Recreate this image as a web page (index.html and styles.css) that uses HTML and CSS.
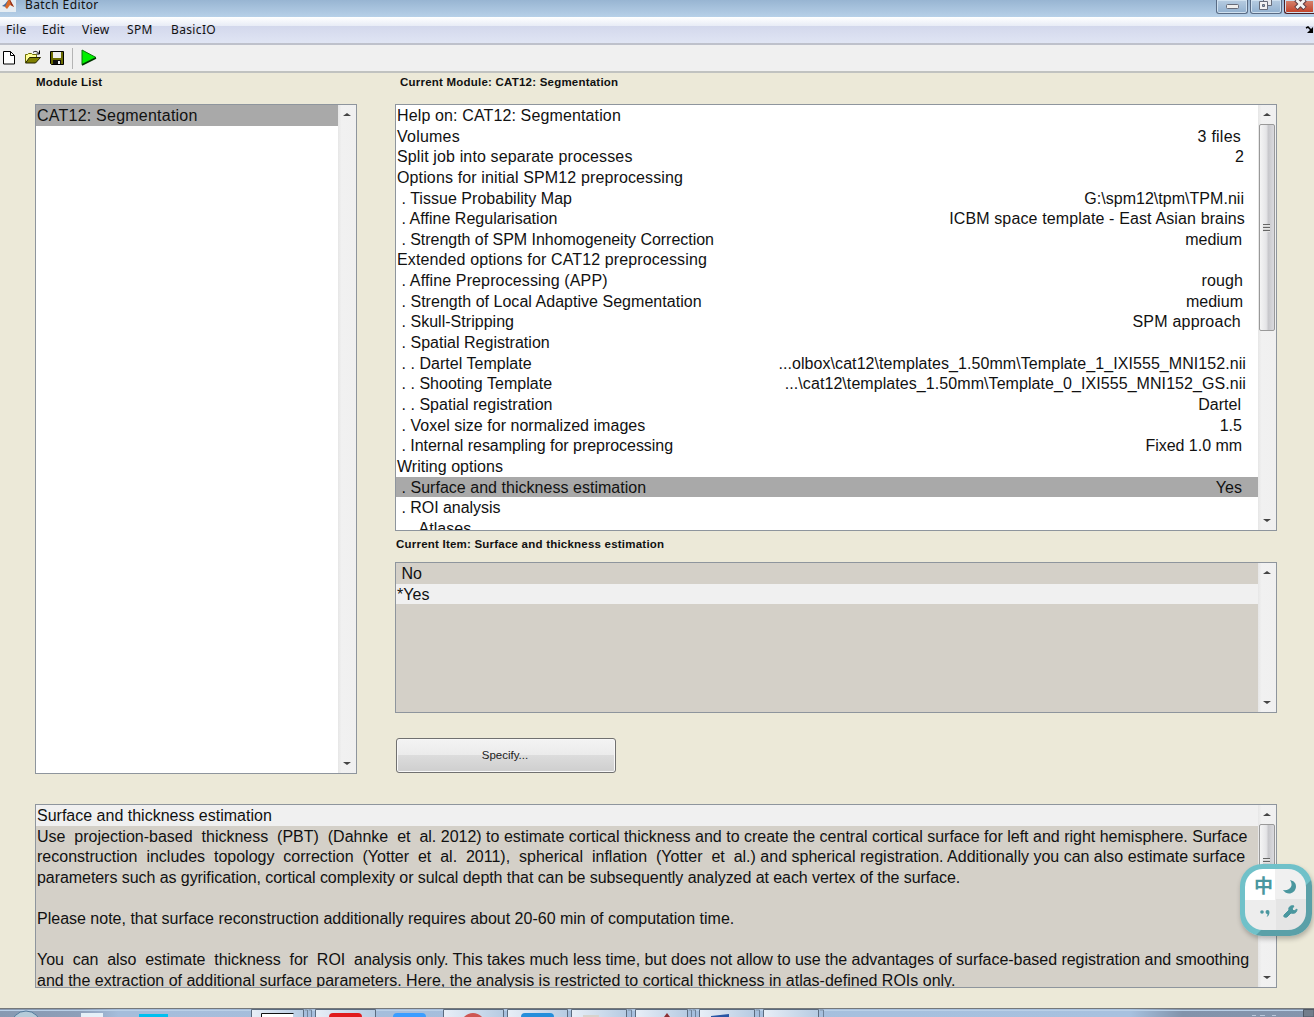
FILE: index.html
```
<!DOCTYPE html>
<html lang="en">
<head>
    <meta charset="UTF-8">
    <meta name="viewport" content="width=device-width, initial-scale=1.0">
    <title>Batch Editor</title>
    <link rel="stylesheet" href="styles.css">
</head>
<body>
    <header class="titlebar">
        <svg class="logo" width="16" height="12" viewBox="0 0 16 12">
            <rect width="16" height="12" fill="#e6edf3"/>
            <path d="M2 6l3-2 4-5 2 4-5 4z" fill="#426b9e"/>
            <path d="M5 7L9-2l5 9-4-2-3 4z" fill="#d96b2b"/>
            <path d="M9-2l5 9-3-2z" fill="#8e2c1b"/>
        </svg>
        <h1>Batch Editor</h1>
        <div class="window-buttons">
            <button class="win-btn"><svg width="30" height="13" viewBox="0 0 30 13"><rect x="9.500" y="4.500" width="12" height="4" rx="1" fill="#eee" stroke="#666b78"/></svg></button>
            <button class="win-btn"><svg width="30" height="13" viewBox="0 0 30 13"><path d="M12.500-2.500h8v8h-8z" fill="#e8eaee" stroke="#666b78"/><path d="M8.500 1.500h8v8h-8z" fill="#f2f2f2" stroke="#666b78"/><path d="M11.500 4.500h2v2h-2z" fill="#8ba9c8" stroke="#666b78"/></svg></button>
            <button class="win-btn close"><svg width="34" height="13" viewBox="0 0 34 13"><path d="M11-.5l9 9M20-.5l-9 9" stroke="#5b3b42" stroke-width="5"/><path d="M11.500 0l8 8M19.500 0l-8 8" stroke="#f4f4f4" stroke-width="3"/></svg></button>
        </div>
    </header>

    <nav class="menubar">
        <span class="m-file">File</span>
        <span class="m-edit">Edit</span>
        <span class="m-view">View</span>
        <span class="m-spm">SPM</span>
        <span>BasicIO</span>
        <svg class="dock" width="9" height="8" viewBox="0 0 9 8"><path d="M1 2l2-1 3 3" fill="none" stroke="#000" stroke-width="1.500"/><path d="M8 1v6H2z"/></svg>
    </nav>

    <div class="toolbar">
        <svg width="100" height="26" viewBox="0 0 100 26">
            <path d="M3.500 6.500h7l4 4v8.500h-11z" fill="#fff" stroke="#000"/>
            <path d="M10.500 6.500v4h4" fill="none" stroke="#000"/>
            <path d="M25.500 17.500v-8h2l1-1h3l1 1h4v3" fill="#ffff99" stroke="#6b6b00"/>
            <path d="M25.500 18l4-5.500h11l-5 5.500z" fill="#808000" stroke="#222200"/>
            <path d="M33 7.500c2-2 4-1 6 1M39.500 5.500v3.500h-3" fill="none" stroke="#000"/>
            <path d="M50.500 6.500h13v13h-12l-1-1z" fill="#6b6b00" stroke="#000"/>
            <path d="M53 7h8v6h-8z" fill="#eee"/>
            <path d="M53 15h8v4h-8z" fill="#111"/>
            <path d="M58 16h2v3h-2z" fill="#eee"/>
            <path d="M72.500 3v21" stroke="#b4b4b4"/>
            <path d="M82 5l14 7.500L82 19.500z" fill="#00f000" stroke="#087508"/>
            <path d="M82 20l14-7" stroke="#003800" stroke-width="1.500"/>
        </svg>
    </div>

    <main>
        <div class="columns">
            <section class="modules">
                <h2>Module List</h2>
                <div class="listbox">
                    <div class="items">
                        <div class="row selected wider">CAT12: Segmentation</div>
                    </div>
                    <div class="scroll"><i class="up"></i><i class="down"></i></div>
                </div>
            </section>

            <section class="current">
                <h2 class="module-title">Current Module: CAT12: Segmentation</h2>
                <div class="listbox module">
                    <div class="items">
                        <div class="row wide">Help on: CAT12: Segmentation</div>
                        <div class="row wider">Volumes<span class="in5">3 files</span></div>
                        <div class="row wide">Split job into separate processes<span class="in2">2</span></div>
                        <div class="row wide">Options for initial SPM12 preprocessing</div>
                        <div class="row"> . Tissue Probability Map<span class="in2">G:\spm12\tpm\TPM.nii</span></div>
                        <div class="row"> . Affine Regularisation<span class="in1 wide">ICBM space template - East Asian brains</span></div>
                        <div class="row tight"> . Strength of SPM Inhomogeneity Correction<span class="in4">medium</span></div>
                        <div class="row wide">Extended options for CAT12 preprocessing</div>
                        <div class="row wide"> . Affine Preprocessing (APP)<span class="in3">rough</span></div>
                        <div class="row"> . Strength of Local Adaptive Segmentation<span class="in3">medium</span></div>
                        <div class="row"> . Skull-Stripping<span class="in5 wider">SPM approach</span></div>
                        <div class="row"> . Spatial Registration</div>
                        <div class="row"> . . Dartel Template<span class="path">...olbox\cat12\templates_1.50mm\Template_1_IXI555_MNI152.nii</span></div>
                        <div class="row"> . . Shooting Template<span class="path">...\cat12\templates_1.50mm\Template_0_IXI555_MNI152_GS.nii</span></div>
                        <div class="row"> . . Spatial registration<span class="in5">Dartel</span></div>
                        <div class="row"> . Voxel size for normalized images<span class="in4">1.5</span></div>
                        <div class="row tight"> . Internal resampling for preprocessing<span class="in4">Fixed 1.0 mm</span></div>
                        <div class="row">Writing options</div>
                        <div class="row selected"> . Surface and thickness estimation<span class="in4">Yes</span></div>
                        <div class="row tight"> . ROI analysis</div>
                        <div class="row"> . . Atlases</div>
                    </div>
                    <div class="scroll"><i class="up"></i><div class="thumb"><b></b></div><i class="down"></i></div>
                </div>
                <h2 class="item-title">Current Item: Surface and thickness estimation</h2>
                <div class="listbox grey item">
                    <div class="items">
                        <div class="row"> No</div>
                        <div class="row light">*Yes</div>
                    </div>
                    <div class="scroll"><i class="up"></i><i class="down"></i></div>
                </div>
                <button class="specify">Specify...</button>
            </section>
        </div>

        <div class="listbox grey help">
            <div class="items">
                <div class="row light">Surface and thickness estimation</div>
                <div class="row">Use  projection-based  thickness  (PBT)  (Dahnke  et  al. 2012) to estimate cortical thickness and to create the central cortical surface for left and right hemisphere. Surface</div>
                <div class="row">reconstruction  includes  topology  correction  (Yotter  et  al.  2011),  spherical  inflation  (Yotter  et  al.) and spherical registration. Additionally you can also estimate surface</div>
                <div class="row narrow">parameters such as gyrification, cortical complexity or sulcal depth that can be subsequently analyzed at each vertex of the surface.</div>
                <div class="row"></div>
                <div class="row">Please note, that surface reconstruction additionally requires about 20-60 min of computation time.</div>
                <div class="row"></div>
                <div class="row tight">You  can  also  estimate  thickness  for  ROI  analysis only. This takes much less time, but does not allow to use the advantages of surface-based registration and smoothing</div>
                <div class="row">and the extraction of additional surface parameters. Here, the analysis is restricted to cortical thickness in atlas-defined ROIs only.</div>
            </div>
            <div class="scroll"><i class="up"></i><div class="thumb short"><b></b></div><i class="down"></i></div>
        </div>
    </main>

    <footer class="taskbar">
        <svg width="1314" height="8" viewBox="0 0 1314 8">
            <defs>
                <linearGradient id="bar">
                    <stop offset="0" stop-color="#8799b1"/>
                    <stop offset=".06" stop-color="#8d9fb9"/>
                    <stop offset=".09" stop-color="#a5bddb"/>
                    <stop offset=".86" stop-color="#a7c1df"/>
                    <stop offset=".9" stop-color="#8293ab"/>
                    <stop offset="1" stop-color="#8495ad"/>
                </linearGradient>
                <linearGradient id="task">
                    <stop offset="0" stop-color="#e8eff7"/>
                    <stop offset="1" stop-color="#b6cbe2"/>
                </linearGradient>
            </defs>
            <rect width="1314" height="8" fill="url(#bar)"/>
            <path d="M0 1.500h1314" stroke="#bad0e7"/>
            <circle cx="26" cy="17" r="15" fill="#b6cbd9" stroke="#52799b"/>
            <path d="M81 4h22v4H81z" fill="#e5f0f8"/>
            <path d="M139 5h29v3h-29z" fill="#00bfef"/>
            <g fill="url(#task)" stroke="#5b6b7e">
                <path d="M251.500 9V.5h52V9z"/>
                <path d="M315.500 9V.5h60V9z"/>
                <path d="M443.500 9V.5h60V9z"/>
                <path d="M507.500 9V.5h60V9z"/>
                <path d="M571.500 9V.5h55V9z"/>
                <path d="M635.500 9V.5h52V9z"/>
                <path d="M699.500 9V.5h55V9z"/>
                <path d="M763.500 9V.5h55V9z"/>
            </g>
            <path d="M307.500 8V1h-3M311.500 8V1h-3M631.500 8V1h-4M691.500 8V1h-3M695.500 8V1h-3M759.500 8V1h-4M823.500 8V1h-4" fill="none" stroke="#6f8299"/>
            <path d="M261 4h32v4h-32z" fill="#fff"/>
            <path d="M261.500 8V4.500h32" fill="none" stroke="#111"/>
            <rect x="329" y="4" width="33" height="12" rx="4" fill="#e01b1d"/>
            <rect x="393" y="4" width="33" height="12" rx="4" fill="#3b9dff"/>
            <circle cx="473" cy="16" r="12" fill="#ce5652"/>
            <rect x="521" y="4" width="33" height="12" rx="4" fill="#248edb"/>
            <path d="M583 6h16v2h-16z" fill="#d6d3cd"/>
            <path d="M664 8l3-4 3 4z" fill="#8c2f33"/>
            <path d="M711 7l18-2v3h-18z" fill="#2856a4"/>
            <path d="M1252 6.500h4M1260 6.500h5M1272 6.500h4" stroke="#bac8db"/>
            <path d="M1303.500 8V.5H1314V8z" fill="#737d8b" stroke="#4f5966"/>
        </svg>
    </footer>

    <!-- input method panel, floats over the window -->
    <div class="ime">
        <div class="ime-pad">
            <span class="lang">中</span>
            <svg width="61" height="61" viewBox="0 0 61 61">
                <path d="M45 11c4 6 0 11-7 10 4 6 12 4 13-3 0-4-2-6-6-7z" fill="#4a979f"/>
                <circle cx="17" cy="43" r="1.800" fill="#4a979f"/>
                <path d="M20.500 43a2 2 0 1 1 4 0q0 4-3 5 1-1 1-3-2 0-2-2z" fill="#4a979f"/>
                <path d="M39 46l5-5c-1-3 2-5 5-4l-2 3 2 2 3-2c0 4-3 5-6 4l-4 4q-4 1-3-2z" fill="#4a979f" stroke="#4a979f"/>
            </svg>
        </div>
    </div>
</body>
</html>
```
FILE: styles.css
```
* {
    box-sizing: border-box;
}
body {
    margin: 0;
    height: 1017px;
    overflow: hidden;
    background-color: #ece9d8;
    font-family: "Liberation Sans", Arial, sans-serif;
    color: #111;
    display: flex;
    flex-direction: column;
}
svg {
    display: block;
}
.titlebar {
    height: 17px;
    flex: none;
    display: flex;
    align-items: flex-start;
    background: linear-gradient(#98b5d2, #b7d0e8);
}
.logo {
    flex: none;
}
.titlebar h1 {
    margin: -3px 0 0 9px;
    font: 12px/16px "Noto Sans", sans-serif;
    letter-spacing: 0.4px;
}
.window-buttons {
    margin-left: auto;
    display: flex;
    gap: 2px;
}
.win-btn {
    width: 32px;
    height: 14px;
    padding: 0;
    border: 1px solid #596b84;
    border-top: none;
    border-radius: 0 0 3px 3px;
    box-shadow: inset 0 0 0 1px #cfe0ef;
    background: linear-gradient(#b7cce1, #91b0cf);
    overflow: hidden;
}
.win-btn.close {
    width: 30px;
    border-color: #4d1e24;
    border-right: none;
    border-radius: 0 0 0 3px;
    background: linear-gradient(#d68672, #c23f25);
}
.menubar {
    height: 28px;
    flex: none;
    display: flex;
    align-items: center;
    padding: 0 0 1px 6px;
    border-bottom: 2px solid #bec1cb;
    background: linear-gradient(#fff, #e8ecf6 34%, #d3d8ec 36%, #e0e5f4);
    font: 12px "Noto Sans", sans-serif;
    letter-spacing: 0.35px;
}
.m-file {
    width: 36px;
}
.m-edit {
    width: 40px;
}
.m-view {
    width: 45px;
}
.m-spm {
    width: 44px;
}
.dock {
    margin-left: auto;
}
.toolbar {
    height: 28px;
    flex: none;
    background-color: #f0f0f0;
    border-bottom: 2px solid #c0c2c0;
}
main {
    flex: 1;
    padding: 0 37px 0 35px;
}
.columns {
    display: flex;
    gap: 38px;
}
.modules {
    width: 322px;
}
.current {
    flex: 1;
}
h2 {
    margin: 0;
    height: 31px;
    padding: 3px 1px;
    font-size: 11.5px;
    line-height: 13px;
    letter-spacing: 0.22px;
}
h2.module-title {
    padding-left: 5px;
}
h2.item-title {
    padding-top: 7px;
}
.listbox {
    height: 670px;
    border: 1px solid #8e959d;
    background-color: #fff;
    display: flex;
    overflow: hidden;
}
.listbox.module {
    height: 427px;
}
.listbox.item {
    height: 151px;
}
.listbox.help {
    height: 184px;
    margin-top: 30px;
}
.listbox.grey {
    background-color: #d4d0c8;
}
.items {
    flex: 1;
    min-width: 0;
}
.row {
    height: 20.65px;
    line-height: 22px;
    padding: 0 12px 0 1px;
    font-size: 16px;
    letter-spacing: 0.03px;
    white-space: pre;
    display: flex;
    justify-content: space-between;
}
.help .row {
    padding-right: 0;
    letter-spacing: 0;
}
.row.wide,
.row .wide {
    letter-spacing: 0.13px;
}
.row.wider,
.row .wider {
    letter-spacing: 0.23px;
}
.row .path {
    letter-spacing: 0.07px;
}
.help .narrow {
    letter-spacing: -0.06px;
}
.row.tight {
    letter-spacing: -0.035px;
}
.selected {
    background-color: #a9a9a9;
}
.light {
    background-color: #f0f0f0;
}
.in1 {
    margin-right: 1px;
}
.in2 {
    margin-right: 2px;
}
.in3 {
    margin-right: 3px;
}
.in4 {
    margin-right: 4px;
}
.in5 {
    margin-right: 5px;
}
.scroll {
    width: 18px;
    flex: none;
    display: flex;
    flex-direction: column;
    align-items: center;
    background: linear-gradient(90deg, #e6e6e6, #f1f1f1 20%, #f0f0f0);
}
.up,
.down {
    border: 4px solid transparent;
}
.up {
    margin-top: 8px;
    border-top: none;
    border-bottom: 3px solid #444;
}
.down {
    margin-top: auto;
    margin-bottom: 8px;
    border-bottom: none;
    border-top: 3px solid #444;
}
.thumb {
    width: 16px;
    height: 207px;
    margin-top: 8px;
    border: 1px solid #999;
    border-radius: 2px;
    background: linear-gradient(90deg, #f5f5f5, #e5e5e7 45%, #c8c8cc 60%, #dadade);
    display: flex;
    align-items: center;
    justify-content: center;
}
.thumb.short {
    height: 75px;
}
.thumb b {
    width: 7px;
    height: 8px;
    margin-right: 2px;
    background: repeating-linear-gradient(#666 0, #666 1px, #eee 1px, #ccc 3px);
}
.specify {
    display: block;
    width: 220px;
    height: 35px;
    margin: 25px 0 0 1px;
    padding: 0 3px 1px 1px;
    border: 1px solid #707070;
    border-radius: 3px;
    box-shadow: inset 0 0 0 1px #f8f8f8;
    background: linear-gradient(#f3f3f3, #ebebeb 48%, #dcdcdc 50%, #cecece);
    font: 11.5px "Liberation Sans", Arial, sans-serif;
    color: #222;
}
.taskbar {
    height: 8px;
    flex: none;
    box-shadow: 0 -1px #75787a;
}
.ime {
    position: absolute;
    left: 1240px;
    top: 864px;
    width: 72px;
    height: 72px;
    padding: 5px 6px 6px 5px;
    border-radius: 22px;
    background: linear-gradient(135deg, #70c1c9 60%, #5aa0a8 61%);
    box-shadow: 1px 3px 5px rgba(0, 0, 0, 0.25);
}
.ime-pad {
    height: 61px;
    border-radius: 18px;
    overflow: hidden;
    background: conic-gradient(#f0f0f0 25%, #e5e5e5 25% 50%, #ededed 50% 75%, #fff 75%);
    display: grid;
}
.ime-pad > * {
    grid-area: 1 / 1;
}
.lang {
    padding: 4px 0 0 9px;
    font: bold 19px/24px "Noto Sans CJK SC", sans-serif;
    color: #4a979f;
}
```
